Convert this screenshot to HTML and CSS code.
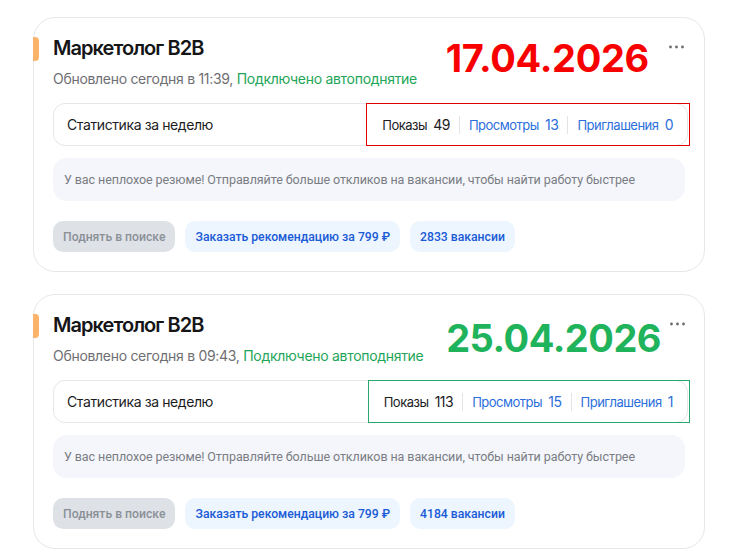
FILE: index.html
```html
<!DOCTYPE html>
<html lang="ru">
<head>
<meta charset="utf-8">
<title>Резюме</title>
<link rel="stylesheet" href="styles.css">
</head>
<body>
<main class="page">
  <section class="card">
    <span class="accent"></span>
    <header class="head">
      <div class="head-main">
        <h2 class="title">Маркетолог B2B</h2>
        <p class="updated">Обновлено сегодня в 11:39, <span class="ok">Подключено автоподнятие</span></p>
      </div>
      <div class="stamp stamp-red">17.04.2026</div>
      <button class="more" aria-label="Ещё"><svg width="15" height="4" viewBox="0 0 15 4"><circle cx="1.5" cy="2" r="1.4"/><circle cx="7.5" cy="2" r="1.4"/><circle cx="13.5" cy="2" r="1.4"/></svg></button>
    </header>
    <div class="stats">
      <span class="stats-label">Статистика за неделю</span>
      <div class="stats-group frame-red">
        <span class="stat">Показы <b class="num">49</b></span>
        <span class="sep"></span>
        <span class="stat link">Просмотры <b class="num">13</b></span>
        <span class="sep"></span>
        <span class="stat link">Приглашения <b class="num">0</b></span>
      </div>
    </div>
    <p class="note">У вас неплохое резюме! Отправляйте больше откликов на вакансии, чтобы найти работу быстрее</p>
    <div class="actions">
      <button class="btn btn-disabled">Поднять в поиске</button>
      <button class="btn btn-light">Заказать рекомендацию за 799 ₽</button>
      <button class="btn btn-light">2833 вакансии</button>
    </div>
  </section>

  <section class="card">
    <span class="accent"></span>
    <header class="head">
      <div class="head-main">
        <h2 class="title">Маркетолог B2B</h2>
        <p class="updated">Обновлено сегодня в 09:43, <span class="ok">Подключено автоподнятие</span></p>
      </div>
      <div class="stamp stamp-green">25.04.2026</div>
      <button class="more" aria-label="Ещё"><svg width="15" height="4" viewBox="0 0 15 4"><circle cx="1.5" cy="2" r="1.4"/><circle cx="7.5" cy="2" r="1.4"/><circle cx="13.5" cy="2" r="1.4"/></svg></button>
    </header>
    <div class="stats">
      <span class="stats-label">Статистика за неделю</span>
      <div class="stats-group frame-green">
        <span class="stat">Показы <b class="num">113</b></span>
        <span class="sep"></span>
        <span class="stat link">Просмотры <b class="num">15</b></span>
        <span class="sep"></span>
        <span class="stat link">Приглашения <b class="num">1</b></span>
      </div>
    </div>
    <p class="note">У вас неплохое резюме! Отправляйте больше откликов на вакансии, чтобы найти работу быстрее</p>
    <div class="actions">
      <button class="btn btn-disabled">Поднять в поиске</button>
      <button class="btn btn-light">Заказать рекомендацию за 799 ₽</button>
      <button class="btn btn-light">4184 вакансии</button>
    </div>
  </section>
</main>
</body>
</html>
```

FILE: styles.css
```css
* { box-sizing: border-box; }
html, body { margin: 0; padding: 0; background: #ffffff; }
body { font-family: Inter, "Noto Sans", sans-serif; color: #1c1c1e; }

.page {
  display: flex;
  flex-direction: column;
  gap: 22px;
  padding: 17px 0 0 33px;
  width: 705px;
}

.card {
  position: relative;
  border: 1px solid #e7e7eb;
  border-radius: 22px;
  padding: 18px 16px 19px 19px;
  background: #fff;
}

.accent {
  position: absolute;
  left: -1px;
  top: 19px;
  width: 6px;
  height: 24px;
  background: #fbb36a;
  border-radius: 0 4px 4px 0;
}

.head {
  display: flex;
  align-items: flex-start;
}
.head-main { flex: 0 0 auto; }
.title {
  margin: 0;
  font-size: 20px;
  line-height: 24px;
  font-weight: 600;
  letter-spacing: -0.95px;
  color: #151517;
}
.updated {
  margin: 9px 0 0;
  font-size: 14px;
  line-height: 20px;
  letter-spacing: -0.3px;
  color: #6f6f73;
  white-space: nowrap;
}
.ok { color: #1ea558; }

.stamp {
  margin: -1px 0 0 auto;
  font-size: 38px;
  line-height: 46px;
  font-weight: 700;
  letter-spacing: -0.3px;
  white-space: nowrap;
}
.stamp-red { color: #f80000; }
.stamp-green {
  color: #1fb35c;
  letter-spacing: -0.5px;
  line-height: 48px;
  margin-top: 1px;
}

.more {
  margin: 9px 4px 0 20px;
  padding: 0;
  border: 0;
  background: none;
  line-height: 0;
  fill: #6a6a6e;
}
.stamp-green + .more { margin-left: 9px; margin-right: 3px; }

.stats {
  display: flex;
  align-items: center;
  justify-content: space-between;
  margin-top: 14px;
  height: 43px;
  border: 1px solid #e6e6ea;
  border-radius: 12px;
  padding-left: 13px;
}
.stats-label { font-size: 14px; letter-spacing: -0.4px; color: #1c1c1e; }
.stats-group {
  display: flex;
  align-items: center;
  gap: 9px;
  height: 43px;
  margin-right: -3px;
  padding: 0 16px 0 15px;
}
.frame-red { border: 1px solid #e00000; }
.frame-green { border: 1px solid #27a86c; }
.stat { font-size: 13px; letter-spacing: -0.5px; color: #1c1c1e; }
.stat .num { font-weight: 400; font-size: 14px; margin-left: 3px; }
.link { color: #2c6fdc; }
.sep { width: 1px; height: 18px; background: #e4e4e8; }

.note {
  margin: 12px 3px 0 0;
  height: 43px;
  display: flex;
  align-items: center;
  padding: 0 11px;
  border-radius: 14px;
  background: #f4f6fb;
  font-family: Roboto, "Noto Sans", sans-serif;
  font-size: 12.5px;
  letter-spacing: -0.08px;
  color: #7a7d83;
}

.actions {
  display: flex;
  gap: 10px;
  margin-top: 20px;
}
.btn {
  height: 31px;
  padding: 0 10px;
  border: 0;
  border-radius: 10px;
  font-family: Roboto, "Noto Sans", sans-serif;
  font-size: 12.2px;
  font-weight: 500;
}
.btn-disabled { background: #dee2e7; color: #8b9097; }
.btn-light { background: #edf5ff; color: #1a5bd6; }
```
